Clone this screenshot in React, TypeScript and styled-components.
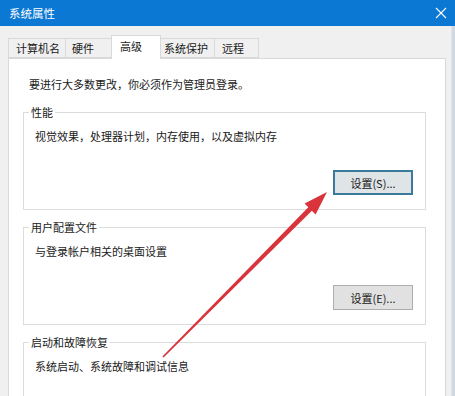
import React from "react";
import styled, { createGlobalStyle } from "styled-components";

const Global = createGlobalStyle`
  html, body { margin: 0; padding: 0; background: #cdd9e3; }
  body { font-family: "Noto Sans CJK SC", "Noto Sans", sans-serif; }
`;

const Screen = styled.div`
  position: relative;
  width: 455px;
  height: 396px;
  overflow: hidden;
  display: flex;
  flex-direction: column;
  background: #cdd9e3;
`;

const TitleBar = styled.div`
  height: 26px;
  flex: none;
  background: #0b78d4;
  display: flex;
  align-items: center;
  justify-content: space-between;
  padding: 0 8px 0 9px;
  color: #fff;
  font-size: 11.5px;
`;

const CloseIcon = styled.svg`
  width: 12px;
  height: 12px;
  display: block;
`;

const Window = styled.div`
  width: 443px;
  flex: 1;
  background: #f0f0f0;
  border-right: 1px solid #e2e6ea;
  padding: 9px 0 0 8px;
  display: flex;
  flex-direction: column;
`;

const TabStrip = styled.div`
  display: flex;
  align-items: flex-end;
  height: 23px;
  flex: none;
  position: relative;
  z-index: 2;
`;

const Tab = styled.div<{ $w: number; $pl: number; $active?: boolean }>`
  box-sizing: border-box;
  width: ${(p) => p.$w}px;
  height: ${(p) => (p.$active ? 24 : 20)}px;
  margin: ${(p) => (p.$active ? "0 -2px -1px -2px" : "0")};
  padding-left: ${(p) => p.$pl}px;
  border: 1px solid #d9d9d9;
  border-bottom: ${(p) => (p.$active ? "none" : "1px solid #d9d9d9")};
  background: ${(p) => (p.$active ? "#ffffff" : "#f0f0f0")};
  position: relative;
  z-index: ${(p) => (p.$active ? 3 : 1)};
  font-size: 11px;
  line-height: ${(p) => (p.$active ? 20 : 18)}px;
  color: #1a1a1a;
  white-space: nowrap;
  & + & { margin-left: ${(p) => (p.$active ? "-2px" : "-1px")}; }
`;

const Panel = styled.div`
  width: 438px;
  box-sizing: border-box;
  flex: 1;
  background: #fff;
  border: 1px solid #d9d9d9;
  border-bottom: none;
  padding: 17px 0 0 0;
  display: flex;
  flex-direction: column;
  position: relative;
  z-index: 1;
`;

const Note = styled.div`
  font-size: 11px;
  line-height: 16px;
  color: #1a1a1a;
  padding-left: 20px;
`;

const Group = styled.fieldset<{ $mt: number; $pb?: number }>`
  margin: ${(p) => p.$mt}px 0 0 14px;
  width: 403px;
  box-sizing: border-box;
  border: 1px solid #dcdcdc;
  padding: 0 12px ${(p) => p.$pb ?? 14}px 11px;
  min-inline-size: 0;
  display: flex;
  flex-direction: column;
`;

const Legend = styled.legend`
  font-size: 11px;
  line-height: 16px;
  color: #1a1a1a;
  padding: 0 2px;
  margin-left: -6px;
`;

const Desc = styled.div`
  font-size: 11px;
  line-height: 16px;
  color: #1a1a1a;
  margin-top: 8px;
`;

const Button = styled.button<{ $focused?: boolean }>`
  align-self: flex-end;
  margin-top: 26px;
  width: 80px;
  height: 25px;
  box-sizing: border-box;
  font-family: inherit;
  font-size: 11px;
  color: #1a1a1a;
  background: ${(p) => (p.$focused ? "#dfe4e7" : "#e1e1e1")};
  border: ${(p) => (p.$focused ? "2px solid #3a7a9c" : "1px solid #adadad")};
  padding: 0;
  cursor: default;
`;

const ArrowLayer = styled.svg`
  position: absolute;
  left: 0;
  top: 0;
  width: 455px;
  height: 396px;
  pointer-events: none;
  z-index: 10;
`;

export default function App() {
  return (
    <>
      <Global />
      <Screen>
        <TitleBar>
          <span>系统属性</span>
          <CloseIcon viewBox="0 0 12 12">
            <path d="M1 1 L11 11 M11 1 L1 11" stroke="#fff" strokeWidth="1.1" />
          </CloseIcon>
        </TitleBar>
        <Window>
          <TabStrip>
            <Tab $w={58} $pl={7}>计算机名</Tab>
            <Tab $w={47} $pl={6}>硬件</Tab>
            <Tab $w={50} $pl={8} $active>高级</Tab>
            <Tab $w={57} $pl={5}>系统保护</Tab>
            <Tab $w={45} $pl={7}>远程</Tab>
          </TabStrip>
          <Panel>
            <Note>要进行大多数更改，你必须作为管理员登录。</Note>
            <Group $mt={12}>
              <Legend>性能</Legend>
              <Desc>视觉效果，处理器计划，内存使用，以及虚拟内存</Desc>
              <Button $focused>设置(S)...</Button>
            </Group>
            <Group $mt={9}>
              <Legend>用户配置文件</Legend>
              <Desc>与登录帐户相关的桌面设置</Desc>
              <Button>设置(E)...</Button>
            </Group>
            <Group $mt={9} $pb={60}>
              <Legend>启动和故障恢复</Legend>
              <Desc>系统启动、系统故障和调试信息</Desc>
            </Group>
          </Panel>
        </Window>
        <ArrowLayer viewBox="0 0 455 396">
          <polygon
            points="162.4,356.6 308.3,207.2 304.6,203.6 327,192 315.6,214.4 311.9,210.8 163.6,357.4"
            fill="#d9343b"
          />
        </ArrowLayer>
      </Screen>
    </>
  );
}
